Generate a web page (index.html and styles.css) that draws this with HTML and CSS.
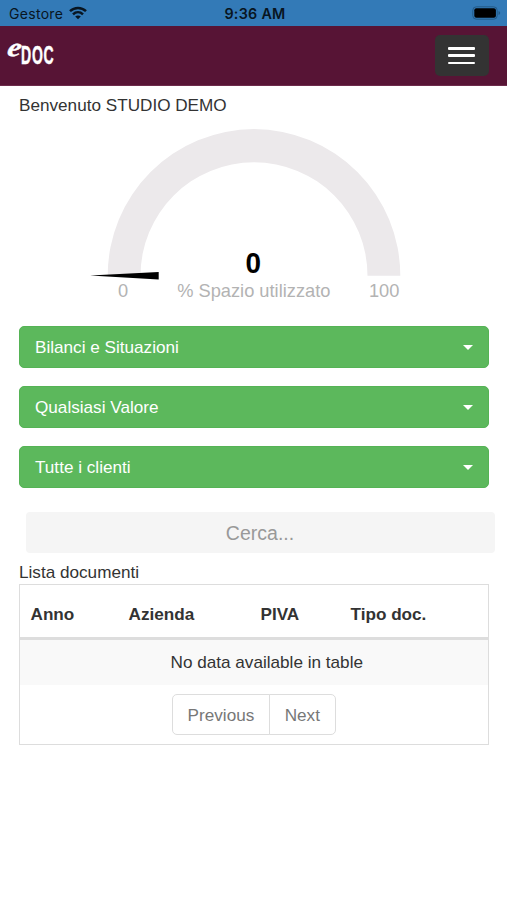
FILE: index.html
```html
<!DOCTYPE html>
<html lang="it">
<head>
<meta charset="utf-8">
<title>eDOC</title>
<link rel="stylesheet" href="styles.css">
</head>
<body>
<div class="status">
  <div class="carrier"><span>Gestore</span>
    <svg class="wifi" width="18" height="14" viewBox="0 0 18 14" fill="none" stroke="#081521" stroke-width="2.5"><path d="M1 5.1C5.5.8 12.5.8 17 5.1M4 8.3c2.9-2.7 7.1-2.7 10 0"/><path d="M9 13.3 6.2 10.5c1.6-1.4 4-1.4 5.6 0Z" fill="#081521" stroke="none"/></svg>
  </div>
  <span class="clock">9:36 AM</span>
  <svg class="battery" width="29" height="14" viewBox="0 0 29 14"><rect x=".8" y=".8" width="24.4" height="12.4" rx="3.5" fill="none" stroke="#235a87"/><rect x="2.3" y="2.3" width="21.6" height="9.4" rx="2"/><path d="M26.5 5v4q1.7-.7 1.7-2t-1.7-2Z" fill="#235a87"/></svg>
</div>
<header class="navbar">
  <svg class="logo" width="50" height="30" viewBox="0 0 50 30"><text class="logo-e" transform="translate(-1.5 16.8) scale(1.2 1) skewX(-8)">e</text><text class="logo-doc" transform="translate(13 25.3) scale(.53 1)">DOC</text></svg>
  <button class="toggle" aria-label="Menu"><i></i><i></i><i></i></button>
</header>
<main>
  <p class="welcome">Benvenuto STUDIO DEMO</p>
  <svg class="gauge" width="340" height="190" viewBox="80 120 340 190">
    <path d="M107.7 275.7a146.3 146.7 0 0 1 292.6 0h-32.8a113.5 113.5 0 0 0-227 0Z" fill="#ece9eb"/>
    <path d="M90 275.6 158.7 272v7.4Z"/>
    <text class="gauge-value" transform="translate(253.3 273.3) scale(.93 1)">0</text>
    <text class="gauge-label" x="123.2" y="297.2">0</text>
    <text class="gauge-label" x="253.8" y="297.2">% Spazio utilizzato</text>
    <text class="gauge-label" x="384.2" y="297.2">100</text>
  </svg>
  <div class="filters">
    <button class="select">Bilanci e Situazioni<i></i></button>
    <button class="select">Qualsiasi Valore<i></i></button>
    <button class="select">Tutte i clienti<i></i></button>
  </div>
  <div class="search">Cerca...</div>
  <h2 class="title">Lista documenti</h2>
  <section class="panel">
    <div class="head"><span>Anno</span><span>Azienda</span><span>PIVA</span><span>Tipo doc.</span></div>
    <div class="empty">No data available in table</div>
    <div class="pager"><button>Previous</button><button>Next</button></div>
  </section>
</main>
</body>
</html>
```
FILE: styles.css
```css
* { box-sizing: border-box; }
body { margin: 0; background: #fff; color: #333; font: 17.15px/24px "Liberation Sans", Arial, sans-serif; }
button { font: inherit; margin: 0; }
svg { display: block; }
.status { height: 25.5px; background: #337ab7; padding: 2px 6px 0 9px; display: grid; grid-template-columns: 1fr auto 1fr; align-items: center; font: 14px/20px Inter, sans-serif; color: #081521; }
.carrier { display: flex; align-items: center; gap: 6px; letter-spacing: .3px; }
.wifi { margin-top: -2px; }
.clock { font-weight: 600; font-size: 14.3px; letter-spacing: .3px; }
.battery { justify-self: end; margin: -1px 0 0; }
.navbar { height: 60.5px; background: #571435; display: flex; justify-content: space-between; align-items: center; padding: 0 18.5px 0 7.5px; border-bottom: 1px solid #6d2b4b; }
.logo { overflow: visible; margin-top: -2px; fill: #fff; stroke: #fff; }
.logo-e { font: italic bold 26px "Liberation Serif", serif; stroke-width: .4px; }
.logo-doc { font: bold 26.5px "Liberation Sans", sans-serif; letter-spacing: 1.4px; stroke-width: .5px; }
.toggle { width: 54px; height: 41px; border: 0; border-radius: 5px; background: #333; padding: 1px 0 0; display: flex; flex-direction: column; align-items: center; justify-content: center; gap: 4.5px; }
.toggle i { width: 27px; height: 2.7px; border-radius: 1px; background: #fff; }
main { padding: 7px 18.5px 0 19px; }
.welcome { margin: 0; height: 27px; }
.gauge { margin-left: 61px; }
.gauge text { text-anchor: middle; }
.gauge-value { font-size: 30px; font-weight: bold; fill: #000; }
.gauge-label { font-size: 18.25px; fill: #b3b3b3; }
.filters { display: grid; gap: 18px; margin-top: 16px; }
.select { height: 42px; display: flex; justify-content: space-between; align-items: center; padding: 0 15px; color: #fff; background: #5cb85c; border: 1px solid #55b355; border-radius: 5px; }
.select i { border: 5px solid transparent; border-top-color: #fff; border-bottom: 0; }
.search { margin: 24px -6px 0 6.5px; height: 41px; border-radius: 4px; background: #f5f5f5; color: #999; text-align: center; font-size: 19.5px; line-height: 42px; }
.title { margin: 7px 0 0; font: inherit; }
.panel { border: 1px solid #ddd; height: 161px; }
.head { display: grid; grid-template-columns: 98px 132px 90px 1fr; height: 55px; padding: 17px 0 0 10.5px; border-bottom: 3px solid #ddd; font-weight: bold; }
.empty { height: 45px; line-height: 45px; text-align: center; padding-left: 26px; background: #f9f9f9; }
.pager { display: flex; justify-content: center; margin-top: 9px; }
.pager button { height: 41px; border: 1px solid #ddd; background: #fff; color: #777; padding: 0 14.7px; }
.pager button:first-child { border-radius: 5px 0 0 5px; }
.pager button:last-child { border-radius: 0 5px 5px 0; margin-left: -1px; }
```
